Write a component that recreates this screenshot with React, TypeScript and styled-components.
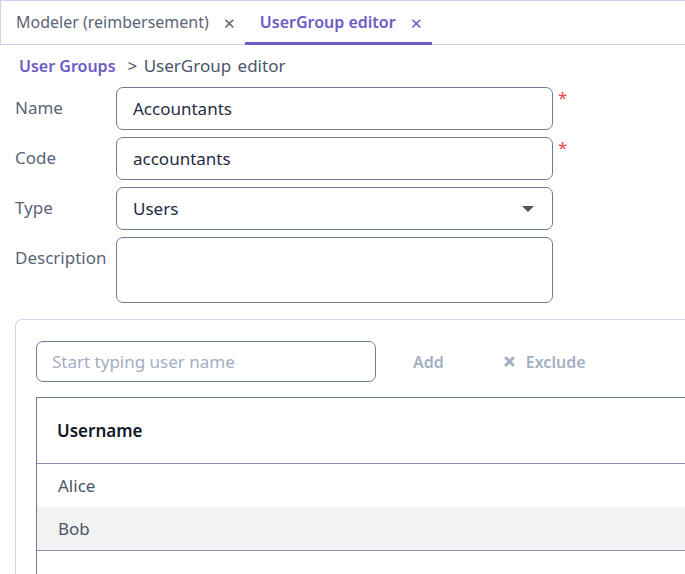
import styled, { createGlobalStyle } from "styled-components";

const GlobalStyle = createGlobalStyle`
  html, body {
    margin: 0;
    padding: 0;
    background: #ffffff;
    font-family: "Noto Sans", "Open Sans", sans-serif;
    overflow: hidden;
  }
  * { box-sizing: border-box; }
`;

const Page = styled.div`
  width: 685px;
  height: 574px;
  overflow: hidden;
`;

const TabBar = styled.div`
  display: flex;
  height: 45px;
  border-top: 1px solid #d6d0ee;
  border-left: 1px solid #d6d0ee;
  border-bottom: 1px solid #d6d0ee;
`;

const Tab = styled.div<{ $active?: boolean }>`
  display: flex;
  align-items: center;
  gap: 14px;
  padding: 0 9px 0 15px;
  font-size: 16px;
  color: ${(p) => (p.$active ? "#6b5bc6" : "#5b6478")};
  font-weight: ${(p) => (p.$active ? 600 : 400)};
  border-bottom: ${(p) => (p.$active ? "3px solid #6b5bc6" : "3px solid transparent")};
  margin-bottom: -1px;
`;

const Close = styled.span<{ $active?: boolean }>`
  font-size: 15px;
  color: ${(p) => (p.$active ? "#6b5bc6" : "#5b6478")};
  font-weight: 400;
  margin-top: 2px;
`;

const Breadcrumb = styled.div`
  display: flex;
  align-items: baseline;
  gap: 12px;
  padding: 9px 0 0 19px;
  font-size: 17px;
  color: #4a5568;
  height: 42px;
`;

const Crumb = styled.span`
  color: #6b5bc6;
  font-weight: 600;
  font-size: 16px;
`;

const Current = styled.span`
  word-spacing: 2px;
`;

const Form = styled.div`
  display: flex;
  flex-direction: column;
  gap: 7px;
  padding-left: 15px;
`;

const Row = styled.div`
  display: flex;
  align-items: flex-start;
`;

const Label = styled.label`
  width: 101px;
  font-size: 17px;
  color: #5b6478;
  padding-top: 9px;
`;

const Field = styled.div<{ $tall?: boolean }>`
  width: 437px;
  height: ${(p) => (p.$tall ? "66px" : "43px")};
  border: 1px solid #6e7b98;
  border-radius: 7px;
  display: flex;
  align-items: ${(p) => (p.$tall ? "flex-start" : "center")};
  justify-content: space-between;
  padding: 0 16px;
  font-size: 17px;
  color: #1f2a44;
`;

const Required = styled.span`
  color: #f0474f;
  font-size: 17px;
  margin-left: 5px;
  line-height: 1;
  margin-top: 2px;
`;

const Caret = styled.span`
  width: 0;
  height: 0;
  border-left: 6px solid transparent;
  border-right: 6px solid transparent;
  border-top: 6px solid #4a5568;
  margin-right: 2px;
`;

const Panel = styled.div`
  margin: 16px 0 0 15px;
  border: 1px solid #d8d4ec;
  border-right: none;
  border-radius: 7px 0 0 0;
  padding: 21px 0 0 20px;
  height: 260px;
`;

const Toolbar = styled.div`
  display: flex;
  align-items: center;
  height: 41px;
`;

const Search = styled.div`
  width: 340px;
  height: 41px;
  border: 1px solid #6e7b98;
  border-radius: 7px;
  display: flex;
  align-items: center;
  padding: 0 15px;
  font-size: 17px;
  color: #a3aec4;
`;

const ToolButton = styled.span<{ $gap?: number }>`
  display: flex;
  align-items: center;
  gap: 11px;
  font-size: 16px;
  font-weight: 600;
  color: #a3aec4;
  margin-left: ${(p) => p.$gap ?? 37}px;
`;

const Table = styled.div`
  margin-top: 15px;
  min-height: 200px;
  border-top: 1px solid #6e7b98;
  border-left: 1px solid #6e7b98;
`;

const HeadCell = styled.div`
  height: 66px;
  display: flex;
  align-items: center;
  padding-left: 20px;
  font-size: 17px;
  font-weight: 600;
  color: #111827;
  border-bottom: 1px solid #8a96b0;
`;

const Cell = styled.div<{ $stripe?: boolean; $last?: boolean }>`
  height: ${(p) => (p.$stripe ? "44px" : "43px")};
  display: flex;
  align-items: center;
  padding-left: 21px;
  font-size: 17px;
  color: #4a5568;
  background: ${(p) => (p.$stripe ? "#f2f2f2" : "transparent")};
  border-bottom: ${(p) => (p.$last ? "1px solid #8a96b0" : "none")};
`;

function XIcon() {
  return (
    <svg width="11" height="11" viewBox="0 0 11 11">
      <path d="M2 2 L9 9 M9 2 L2 9" stroke="#a3aec4" strokeWidth="3" strokeLinecap="round" />
    </svg>
  );
}

export default function App() {
  return (
    <Page>
      <GlobalStyle />
      <TabBar>
        <Tab>
          Modeler (reimbersement)
          <Close>✕</Close>
        </Tab>
        <Tab $active>
          UserGroup editor
          <Close $active>✕</Close>
        </Tab>
      </TabBar>
      <Breadcrumb>
        <Crumb>User Groups</Crumb>
        <Current>&gt; UserGroup editor</Current>
      </Breadcrumb>
      <Form>
        <Row>
          <Label>Name</Label>
          <Field>Accountants</Field>
          <Required>*</Required>
        </Row>
        <Row>
          <Label>Code</Label>
          <Field>accountants</Field>
          <Required>*</Required>
        </Row>
        <Row>
          <Label>Type</Label>
          <Field>
            Users
            <Caret />
          </Field>
        </Row>
        <Row>
          <Label>Description</Label>
          <Field $tall />
        </Row>
      </Form>
      <Panel>
        <Toolbar>
          <Search>Start typing user name</Search>
          <ToolButton>Add</ToolButton>
          <ToolButton $gap={60}>
            <XIcon />
            Exclude
          </ToolButton>
        </Toolbar>
        <Table>
          <HeadCell>Username</HeadCell>
          <Cell>Alice</Cell>
          <Cell $stripe $last>
            Bob
          </Cell>
        </Table>
      </Panel>
    </Page>
  );
}
